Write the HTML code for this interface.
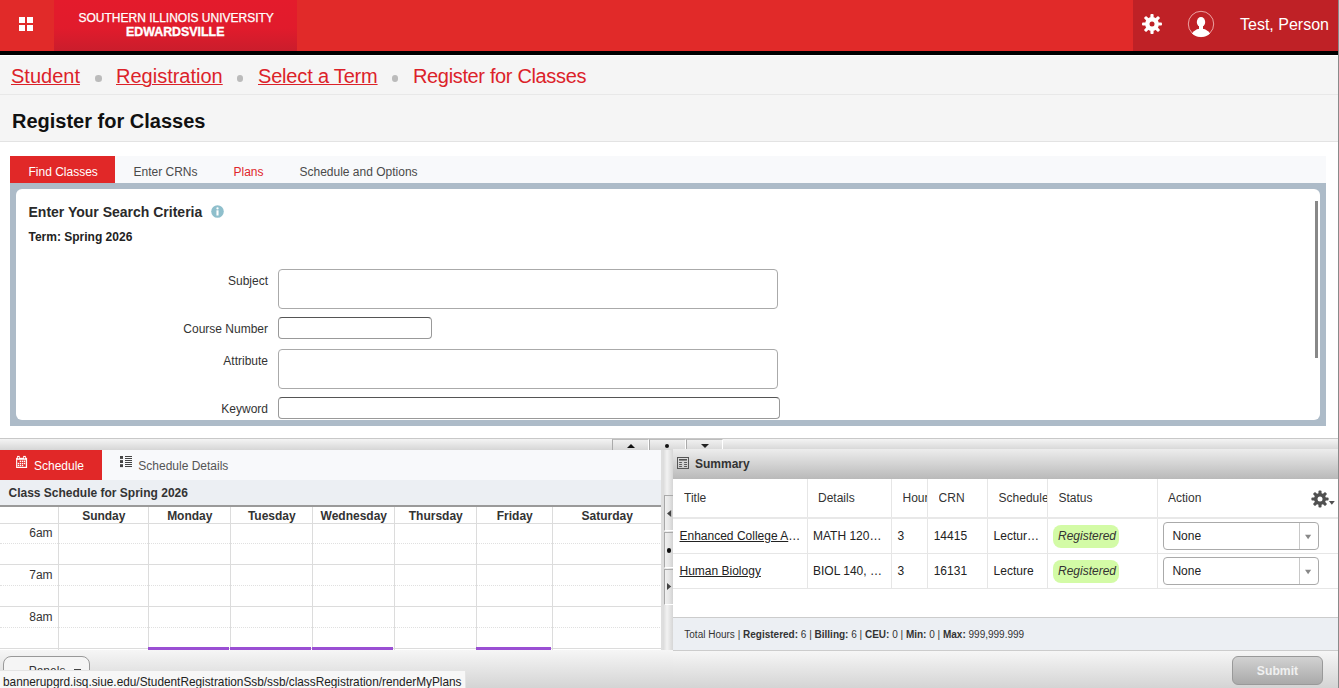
<!DOCTYPE html>
<html><head><meta charset="utf-8">
<style>
*{margin:0;padding:0;box-sizing:border-box}
html,body{width:1339px;height:688px;overflow:hidden;background:#fff;font-family:"Liberation Sans",sans-serif;position:relative}
.a{position:absolute;display:block}
.t{position:absolute;white-space:nowrap;line-height:1}
</style></head><body>
<div class="a" style="left:0px;top:0px;width:1339px;height:51px;background:#e12a29"></div>
<div class="a" style="left:1133px;top:0px;width:205px;height:51px;background:#bf2126"></div>
<div class="a" style="left:0px;top:51px;width:1339px;height:4px;background:#000"></div>
<div class="a" style="left:54px;top:0px;width:243px;height:51px;background:linear-gradient(#e41b2c,#e11b2c 55%,#ca1d2c)"></div>
<div class="a" style="left:19px;top:17px;width:6px;height:6px;background:#fff"></div>
<div class="a" style="left:27px;top:17px;width:6px;height:6px;background:#fff"></div>
<div class="a" style="left:19px;top:25px;width:6px;height:6px;background:#fff"></div>
<div class="a" style="left:27px;top:25px;width:6px;height:6px;background:#fff"></div>
<div class="t" style="left:78.5px;top:11.84px;font-size:12px;color:#fff;-webkit-text-stroke:0.25px #fff">SOUTHERN ILLINOIS UNIVERSITY</div>
<div class="t" style="left:126px;top:25.80px;font-size:12.4px;color:#fff;font-weight:bold;-webkit-text-stroke:0.35px #fff">EDWARDSVILLE</div>
<div class="t" style="left:1240px;top:16.86px;font-size:16px;color:#fff">Test, Person</div>
<svg class="a" style="left:1142px;top:14px" width="20" height="20" viewBox="-10 -10 20 20"><g fill="#fff"><circle r="6.9"/><rect x="-1.6" y="-10" width="3.2" height="20" rx="1" transform="rotate(0)"/><rect x="-1.6" y="-10" width="3.2" height="20" rx="1" transform="rotate(45)"/><rect x="-1.6" y="-10" width="3.2" height="20" rx="1" transform="rotate(90)"/><rect x="-1.6" y="-10" width="3.2" height="20" rx="1" transform="rotate(135)"/></g><circle r="2.5" fill="#bf2126"/></svg>
<svg class="a" style="left:1187px;top:10px" width="28" height="28" viewBox="0 0 28 28"><defs><clipPath id="uc"><circle cx="14" cy="14" r="13"/></clipPath></defs><circle cx="14" cy="14" r="12.7" fill="none" stroke="#f0b0b0" stroke-width="0.9"/><g fill="#fff" clip-path="url(#uc)"><ellipse cx="14" cy="12" rx="4.2" ry="5.1"/><rect x="12" y="15" width="4" height="5"/><ellipse cx="14" cy="28.5" rx="10.5" ry="10"/></g></svg>
<div class="a" style="left:0px;top:55px;width:1339px;height:87px;background:#f5f5f5"></div>
<div class="a" style="left:0px;top:94px;width:1339px;height:1px;background:#e8e8e8"></div>
<div class="a" style="left:0px;top:55px;width:1339px;height:1px;background:#fff"></div>
<div class="a" style="left:0px;top:141px;width:1339px;height:1px;background:#e3e3e3"></div>
<div class="t" style="left:11px;top:65.87px;font-size:20px;color:#dc2229;text-decoration:underline;text-decoration-thickness:1px">Student</div>
<div class="t" style="left:116px;top:65.87px;font-size:20px;color:#dc2229;text-decoration:underline;text-decoration-thickness:1px">Registration</div>
<div class="t" style="left:258px;top:65.87px;font-size:20px;color:#dc2229;text-decoration:underline;text-decoration-thickness:1px;letter-spacing:-0.18px">Select a Term</div>
<div class="t" style="left:413px;top:65.87px;font-size:20px;color:#dc2229;letter-spacing:-0.35px">Register for Classes</div>
<div class="a" style="left:95.0px;top:75px;width:6.6px;height:6.6px;background:#bbb;border-radius:50%"></div>
<div class="a" style="left:236.7px;top:75px;width:6.6px;height:6.6px;background:#bbb;border-radius:50%"></div>
<div class="a" style="left:391.7px;top:75px;width:6.6px;height:6.6px;background:#bbb;border-radius:50%"></div>
<div class="t" style="left:12px;top:110.87px;font-size:20px;color:#111;font-weight:bold">Register for Classes</div>
<div class="a" style="left:10px;top:156px;width:1316px;height:27px;background:#f8f9fb"></div>
<div class="a" style="left:10px;top:156px;width:105px;height:27px;background:#e12828"></div>
<div class="t" style="left:28.5px;top:165.84px;font-size:12px;color:#fff">Find Classes</div>
<div class="t" style="left:133.5px;top:165.84px;font-size:12px;color:#4a4a4a">Enter CRNs</div>
<div class="t" style="left:233.5px;top:165.84px;font-size:12px;color:#df262b">Plans</div>
<div class="t" style="left:299.5px;top:165.84px;font-size:12px;color:#4a4a4a">Schedule and Options</div>
<div class="a" style="left:10px;top:183px;width:1316px;height:243px;background:#adbbc8"></div>
<div class="a" style="left:16px;top:189px;width:1304px;height:231px;background:#fff;border-radius:6px"></div>
<div class="t" style="left:28.5px;top:205.15px;font-size:14px;color:#2a2a2a;font-weight:bold">Enter Your Search Criteria</div>
<svg class="a" style="left:211px;top:204.5px" width="13" height="13" viewBox="0 0 13 13"><circle cx="6.5" cy="6.5" r="6.3" fill="#8fbfcc"/><circle cx="6.5" cy="3.4" r="1.15" fill="#fff"/><rect x="5.45" y="5.3" width="2.1" height="5.2" fill="#fff"/></svg>
<div class="t" style="left:28.5px;top:230.84px;font-size:12px;color:#222;font-weight:bold">Term: Spring 2026</div>
<div class="t" style="right:1071px;top:274.64px;font-size:12px;color:#333">Subject</div>
<div class="a" style="left:278px;top:269px;width:500px;height:40px;border:1px solid #aaa;border-radius:4px"></div>
<div class="t" style="right:1071px;top:323.04px;font-size:12px;color:#333">Course Number</div>
<div class="a" style="left:278px;top:317px;width:154px;height:22px;border:1px solid #999;border-top-color:#555;border-radius:4px"></div>
<div class="t" style="right:1071px;top:355.24px;font-size:12px;color:#333">Attribute</div>
<div class="a" style="left:278px;top:349px;width:500px;height:40px;border:1px solid #aaa;border-radius:4px"></div>
<div class="t" style="right:1071px;top:402.84px;font-size:12px;color:#333">Keyword</div>
<div class="a" style="left:278px;top:397px;width:502px;height:22px;border:1px solid #999;border-top-color:#555;border-radius:4px"></div>
<div class="a" style="left:1315px;top:201px;width:2.5px;height:157px;background:#888"></div>
<div class="a" style="left:1338px;top:0px;width:1px;height:688px;background:#8a8a8a"></div>
<div class="a" style="left:0px;top:438px;width:1338px;height:12px;border-top:1px solid #c8c8c8;background:linear-gradient(#f4f4f4,#d6d6d6)"></div>
<div class="a" style="left:612px;top:439px;width:37px;height:11px;border-left:1px solid #aaa;border-right:1px solid #fff;border-top:1px solid #bdbdbd;background:linear-gradient(#f0f0f0,#d8d8d8)"></div>
<div class="a" style="left:649px;top:439px;width:37px;height:11px;border-left:1px solid #aaa;border-right:1px solid #fff;border-top:1px solid #bdbdbd;background:linear-gradient(#f0f0f0,#d8d8d8)"></div>
<div class="a" style="left:686px;top:439px;width:37px;height:11px;border-left:1px solid #aaa;border-right:1px solid #fff;border-top:1px solid #bdbdbd;background:linear-gradient(#f0f0f0,#d8d8d8)"></div>
<svg class="a" style="left:626px;top:443px" width="10" height="6" viewBox="0 0 10 6"><path d="M1,5 L5,1 L9,5Z" fill="#111"/></svg>
<div class="a" style="left:665px;top:444px;width:4.2px;height:4.2px;background:#111;border-radius:50%"></div>
<svg class="a" style="left:700px;top:443px" width="10" height="6" viewBox="0 0 10 6"><path d="M1,1 L9,1 L5,5Z" fill="#222"/></svg>
<div class="a" style="left:0px;top:450px;width:663px;height:30px;background:#f8f9fb"></div>
<div class="a" style="left:0px;top:450px;width:102px;height:30px;background:#e12828"></div>
<svg class="a" style="left:12px;top:452px" width="20" height="20" viewBox="0 0 20 20"><rect x="4.1" y="5.8" width="11" height="10.2" fill="#fff"/><rect x="5.2" y="7.8" width="8.6" height="7" fill="#e12828"/><rect x="5.1" y="3.9" width="2.6" height="2.4" fill="#fff"/><rect x="11.2" y="3.9" width="2.6" height="2.4" fill="#fff"/><circle cx="6.4" cy="5.8" r="0.7" fill="#e12828"/><circle cx="12.5" cy="5.8" r="0.7" fill="#e12828"/><rect x="5.7" y="10.8" width="1.4" height="1.4" fill="#fff"/><rect x="5.7" y="12.8" width="1.4" height="1.4" fill="#fff"/><rect x="7.7" y="8.6" width="1.4" height="1.4" fill="#fff"/><rect x="7.7" y="10.8" width="1.4" height="1.4" fill="#fff"/><rect x="7.7" y="12.8" width="1.4" height="1.4" fill="#fff"/><rect x="9.8" y="8.6" width="1.4" height="1.4" fill="#fff"/><rect x="9.8" y="10.8" width="1.4" height="1.4" fill="#fff"/><rect x="9.8" y="12.8" width="1.4" height="1.4" fill="#fff"/><rect x="11.8" y="8.6" width="1.4" height="1.4" fill="#fff"/><rect x="11.8" y="10.8" width="1.4" height="1.4" fill="#fff"/></svg>
<div class="t" style="left:34px;top:459.84px;font-size:12px;color:#fff">Schedule</div>
<svg class="a" style="left:116px;top:452px" width="20" height="20" viewBox="0 0 20 20"><g fill="#444"><rect x="4" y="4" width="3" height="2.9"/><rect x="4" y="8.1" width="3" height="2.9"/><rect x="4" y="12.2" width="3" height="2.9"/><rect x="9" y="4.0" width="7" height="1"/><rect x="9" y="6.0" width="7" height="1"/><rect x="9" y="8.0" width="7" height="1"/><rect x="9" y="10.0" width="7" height="1"/><rect x="9" y="12.0" width="7" height="1"/><rect x="9" y="14.0" width="7" height="1"/></g></svg>
<div class="t" style="left:138.3px;top:459.84px;font-size:12px;color:#555">Schedule Details</div>
<div class="a" style="left:0px;top:480px;width:663px;height:25px;background:#eceff3"></div>
<div class="a" style="left:0px;top:505px;width:663px;height:1.5px;background:#9a9a9a"></div>
<div class="t" style="left:8.5px;top:486.74px;font-size:12px;color:#333;font-weight:bold">Class Schedule for Spring 2026</div>
<div class="a" style="left:0px;top:507px;width:662px;height:143px;background:#fff"></div>
<div class="a" style="left:0px;top:523px;width:662px;height:1px;background:#dcdcdc"></div>
<div class="a" style="left:0px;top:564px;width:662px;height:1px;background:#dcdcdc"></div>
<div class="a" style="left:0px;top:606px;width:662px;height:1px;background:#dcdcdc"></div>
<div class="a" style="left:0px;top:648px;width:662px;height:1px;background:#dcdcdc"></div>
<div class="a" style="left:0px;top:543px;width:662px;height:0px;border-top:1px dotted #e0e0e0"></div>
<div class="a" style="left:0px;top:585px;width:662px;height:0px;border-top:1px dotted #e0e0e0"></div>
<div class="a" style="left:0px;top:627px;width:662px;height:0px;border-top:1px dotted #e0e0e0"></div>
<div class="a" style="left:58px;top:507px;width:1px;height:143px;background:#dcdcdc"></div>
<div class="a" style="left:148px;top:507px;width:1px;height:143px;background:#dcdcdc"></div>
<div class="a" style="left:230px;top:507px;width:1px;height:143px;background:#dcdcdc"></div>
<div class="a" style="left:312px;top:507px;width:1px;height:143px;background:#dcdcdc"></div>
<div class="a" style="left:394px;top:507px;width:1px;height:143px;background:#dcdcdc"></div>
<div class="a" style="left:476px;top:507px;width:1px;height:143px;background:#dcdcdc"></div>
<div class="a" style="left:552px;top:507px;width:1px;height:143px;background:#dcdcdc"></div>
<div class="a" style="left:661px;top:507px;width:1px;height:143px;background:#dcdcdc"></div>
<div class="t" style="left:58.8px;width:90px;text-align:center;top:509.64px;font-size:12px;font-weight:bold;color:#333">Sunday</div>
<div class="t" style="left:148.8px;width:82px;text-align:center;top:509.64px;font-size:12px;font-weight:bold;color:#333">Monday</div>
<div class="t" style="left:230.8px;width:82px;text-align:center;top:509.64px;font-size:12px;font-weight:bold;color:#333">Tuesday</div>
<div class="t" style="left:312.8px;width:82px;text-align:center;top:509.64px;font-size:12px;font-weight:bold;color:#333">Wednesday</div>
<div class="t" style="left:394.8px;width:82px;text-align:center;top:509.64px;font-size:12px;font-weight:bold;color:#333">Thursday</div>
<div class="t" style="left:476.8px;width:76px;text-align:center;top:509.64px;font-size:12px;font-weight:bold;color:#333">Friday</div>
<div class="t" style="left:552.8px;width:109px;text-align:center;top:509.64px;font-size:12px;font-weight:bold;color:#333">Saturday</div>
<div class="t" style="right:1286.4px;top:526.74px;font-size:12px;color:#333">6am</div>
<div class="t" style="right:1286.4px;top:568.74px;font-size:12px;color:#333">7am</div>
<div class="t" style="right:1286.4px;top:610.74px;font-size:12px;color:#333">8am</div>
<div class="a" style="left:148px;top:647px;width:81px;height:3px;background:#9a4fd3"></div>
<div class="a" style="left:230px;top:647px;width:81px;height:3px;background:#9a4fd3"></div>
<div class="a" style="left:312px;top:647px;width:81px;height:3px;background:#9a4fd3"></div>
<div class="a" style="left:476px;top:647px;width:75px;height:3px;background:#9a4fd3"></div>
<div class="a" style="left:661px;top:450px;width:2px;height:200px;background:#dedede"></div>
<div class="a" style="left:663px;top:450px;width:10px;height:200px;background:linear-gradient(90deg,#dadada,#f2f2f2 40%,#d6d6d6)"></div>
<div class="a" style="left:664px;top:495px;width:9px;height:36px;border-left:1px solid #a8a8a8;border-top:1px solid #aaa;border-bottom:1px solid #fff;background:linear-gradient(90deg,#f0f0f0,#e6e6e6 50%,#d2d2d2)"></div>
<div class="a" style="left:664px;top:532px;width:9px;height:36px;border-left:1px solid #a8a8a8;border-top:1px solid #aaa;border-bottom:1px solid #fff;background:linear-gradient(90deg,#f0f0f0,#e6e6e6 50%,#d2d2d2)"></div>
<div class="a" style="left:664px;top:569px;width:9px;height:36px;border-left:1px solid #a8a8a8;border-top:1px solid #aaa;border-bottom:1px solid #fff;background:linear-gradient(90deg,#f0f0f0,#e6e6e6 50%,#d2d2d2)"></div>
<svg class="a" style="left:664px;top:508px" width="9" height="11" viewBox="0 0 9 11"><path d="M7.2,2 L7.2,9 L3,5.5Z" fill="#444"/></svg>
<div class="a" style="left:666.6px;top:548.4px;width:4.2px;height:4.2px;background:#111;border-radius:50%"></div>
<svg class="a" style="left:664px;top:581px" width="9" height="11" viewBox="0 0 9 11"><path d="M3,2 L3,9 L7.2,5.5Z" fill="#444"/></svg>
<div class="a" style="left:673px;top:449px;width:665px;height:30px;background:linear-gradient(#ededed,#b9b9b9)"></div>
<svg class="a" style="left:677px;top:457px" width="12" height="12" viewBox="0 0 12 12"><rect x="0.5" y="0.5" width="11" height="11" fill="none" stroke="#555"/><rect x="2" y="2" width="8" height="1.6" fill="#555"/><rect x="2.1" y="5.05" width="2.8" height="0.95" fill="#555"/><rect x="7.1" y="5.05" width="2.9" height="0.95" fill="#555"/><rect x="2.1" y="7.05" width="2.8" height="0.95" fill="#555"/><rect x="7.1" y="7.05" width="2.9" height="0.95" fill="#555"/><rect x="2.1" y="9.0" width="2.8" height="0.95" fill="#555"/><rect x="7.1" y="9.0" width="2.9" height="0.95" fill="#555"/></svg>
<div class="t" style="left:695px;top:458.34px;font-size:12px;color:#333;font-weight:bold">Summary</div>
<div class="a" style="left:673px;top:479px;width:665px;height:139px;background:#fff"></div>
<div class="a" style="left:807px;top:479px;width:1px;height:110px;background:#e6e6e6"></div>
<div class="a" style="left:891px;top:479px;width:1px;height:110px;background:#e6e6e6"></div>
<div class="a" style="left:927px;top:479px;width:1px;height:110px;background:#e6e6e6"></div>
<div class="a" style="left:987px;top:479px;width:1px;height:110px;background:#e6e6e6"></div>
<div class="a" style="left:1047px;top:479px;width:1px;height:110px;background:#e6e6e6"></div>
<div class="a" style="left:1157px;top:479px;width:1px;height:110px;background:#e6e6e6"></div>
<div class="a" style="left:673px;top:517px;width:665px;height:2px;background:#e8e8e8"></div>
<div class="a" style="left:673px;top:553px;width:665px;height:1px;background:#e6e6e6"></div>
<div class="a" style="left:673px;top:588px;width:665px;height:1px;background:#e6e6e6"></div>
<div class="t" style="left:684px;width:120px;overflow:hidden;top:491.64px;font-size:12px;color:#333">Title</div>
<div class="t" style="left:818px;width:70px;overflow:hidden;top:491.64px;font-size:12px;color:#333">Details</div>
<div class="t" style="left:902.5px;width:24.5px;overflow:hidden;top:491.64px;font-size:12px;color:#333">Hours</div>
<div class="t" style="left:938.6px;width:48px;overflow:hidden;top:491.64px;font-size:12px;color:#333">CRN</div>
<div class="t" style="left:998.6px;width:48.4px;overflow:hidden;top:491.64px;font-size:12px;color:#333">Schedule</div>
<div class="t" style="left:1058.5px;width:98px;overflow:hidden;top:491.64px;font-size:12px;color:#333">Status</div>
<div class="t" style="left:1168px;width:120px;overflow:hidden;top:491.64px;font-size:12px;color:#333">Action</div>
<svg class="a" style="left:1311px;top:490px" width="25" height="19" viewBox="0 0 25 19"><g transform="translate(9,9)" fill="#505050"><circle r="6"/><rect x="-1.55" y="-8.6" width="3.1" height="17.2" rx="1" transform="rotate(0)"/><rect x="-1.55" y="-8.6" width="3.1" height="17.2" rx="1" transform="rotate(45)"/><rect x="-1.55" y="-8.6" width="3.1" height="17.2" rx="1" transform="rotate(90)"/><rect x="-1.55" y="-8.6" width="3.1" height="17.2" rx="1" transform="rotate(135)"/></g><circle cx="9" cy="9" r="2.5" fill="#fff"/><path d="M17.9,11.1 L23.8,11.1 L20.85,14.8Z" fill="#505050"/></svg>
<div class="t" style="left:679.5px;top:529.64px;font-size:12px;color:#222"><u>Enhanced College A</u>…</div>
<div class="t" style="left:813px;top:529.64px;font-size:12px;color:#222">MATH 120…</div>
<div class="t" style="left:897.4px;top:529.64px;font-size:12px;color:#222">3</div>
<div class="t" style="left:933.7px;top:529.64px;font-size:12px;color:#222">14415</div>
<div class="t" style="left:993.6px;top:529.64px;font-size:12px;color:#222">Lectur…</div>
<div class="a" style="left:1053px;top:525px;width:66px;height:23px;border-radius:8px;background:#d3fba6"></div>
<div class="t" style="left:1058px;top:529.64px;font-size:12px;color:#333;font-style:italic">Registered</div>
<div class="a" style="left:1163px;top:522px;width:156px;height:28px;border:1px solid #aaa;border-radius:4px;background:#fff"></div>
<div class="a" style="left:1299px;top:523px;width:1px;height:26px;background:#c8c8c8"></div>
<div class="t" style="left:1172.4px;top:529.64px;font-size:12px;color:#222">None</div>
<svg class="a" style="left:1304px;top:534px" width="8" height="6" viewBox="0 0 8 6"><path d="M1,0.8 L7.2,0.8 L4.1,5.3Z" fill="#888"/></svg>
<div class="t" style="left:679.5px;top:564.74px;font-size:12px;color:#222"><u>Human Biology</u></div>
<div class="t" style="left:813px;top:564.74px;font-size:12px;color:#222">BIOL 140, …</div>
<div class="t" style="left:897.4px;top:564.74px;font-size:12px;color:#222">3</div>
<div class="t" style="left:933.7px;top:564.74px;font-size:12px;color:#222">16131</div>
<div class="t" style="left:993.6px;top:564.74px;font-size:12px;color:#222">Lecture</div>
<div class="a" style="left:1053px;top:560px;width:66px;height:23px;border-radius:8px;background:#d3fba6"></div>
<div class="t" style="left:1058px;top:564.74px;font-size:12px;color:#333;font-style:italic">Registered</div>
<div class="a" style="left:1163px;top:557px;width:156px;height:28px;border:1px solid #aaa;border-radius:4px;background:#fff"></div>
<div class="a" style="left:1299px;top:558px;width:1px;height:26px;background:#c8c8c8"></div>
<div class="t" style="left:1172.4px;top:564.74px;font-size:12px;color:#222">None</div>
<svg class="a" style="left:1304px;top:569px" width="8" height="6" viewBox="0 0 8 6"><path d="M1,0.8 L7.2,0.8 L4.1,5.3Z" fill="#888"/></svg>
<div class="a" style="left:673px;top:617px;width:665px;height:34px;background:#eceff3;border-top:1px solid #ccc;border-bottom:1px solid #ccc"></div>
<div class="t" style="left:684.3px;top:629.83px;font-size:10px;color:#333">Total Hours | <b>Registered:</b> 6 | <b>Billing:</b> 6 | <b>CEU:</b> 0 | <b>Min:</b> 0 | <b>Max:</b> 999,999.999</div>
<div class="a" style="left:0px;top:650px;width:673px;height:38px;background:linear-gradient(#f6f6f6,#d4d4d4)"></div>
<div class="a" style="left:673px;top:651px;width:665px;height:37px;background:linear-gradient(#f6f6f6,#d4d4d4)"></div>
<div class="a" style="left:3px;top:656px;width:87px;height:40px;border:1px solid #999;border-radius:8px;background:#f5f5f5"></div>
<div class="t" style="left:28.7px;top:664.84px;font-size:12px;color:#333">Panels</div>
<div class="a" style="left:74px;top:668.5px;width:7px;height:1.3px;background:#444"></div>
<div class="a" style="left:1232px;top:656px;width:91px;height:29px;border:1px solid #999;border-radius:6px;background:linear-gradient(#d2d2d2,#a9a9a9)"></div>
<div class="t" style="left:1232px;width:91px;text-align:center;top:665.17px;font-size:12.2px;font-weight:bold;color:#f0f0f0">Submit</div>
<div class="a" style="left:0px;top:670px;width:466px;height:18px;background:#f7f7f7;border-top:1px solid #e4e4e4;border-right:1px solid #e4e4e4"></div>
<div class="t" style="left:3px;top:674.70px;font-size:13px;color:#222;transform:scaleX(0.909);transform-origin:0 0">bannerupgrd.isq.siue.edu/StudentRegistrationSsb/ssb/classRegistration/renderMyPlans</div>
</body></html>
